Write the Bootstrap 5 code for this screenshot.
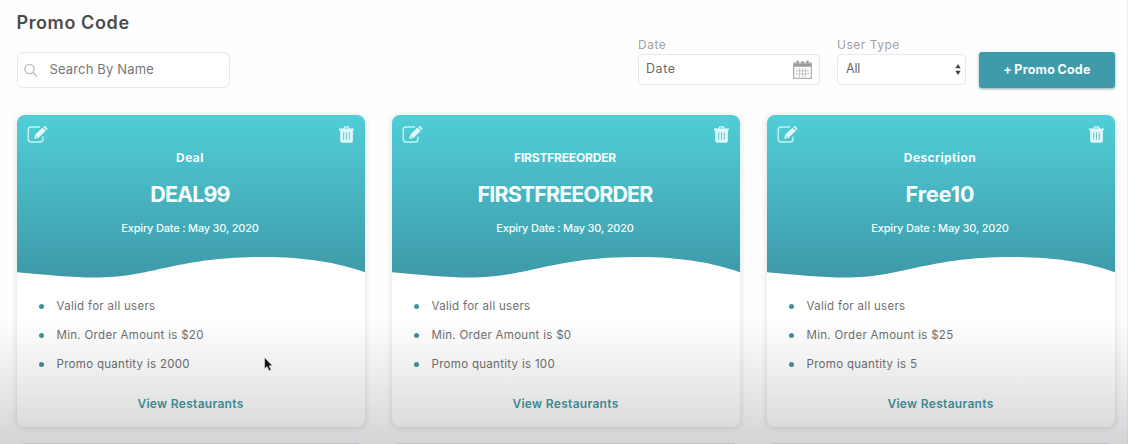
<!DOCTYPE html>
<html lang="en">
<head>
<meta charset="utf-8">
<meta name="viewport" content="width=device-width, initial-scale=1">
<title>Promo Code</title>
<link href="https://cdn.jsdelivr.net/npm/bootstrap@5.3.0/dist/css/bootstrap.min.css" rel="stylesheet">
<style>
  body { font-family: Inter, "Open Sans", sans-serif; color: #6b6b6b; background: #fefefe; height: 444px; overflow: hidden; }
  .page { height: 444px; padding: 0 12px 0 16.500px; overflow: hidden; border-right: 1px solid #eaf3f6; }
  .topbar { height: 115px; }
  .page-title { font-size: 18px; line-height: 24px; font-weight: 600; color: #4b4b4b; margin: 11px 0 17px; letter-spacing: .6px; }
  .search-box { width: 213px; height: 36px; border: 1px solid #e8e8ea; border-radius: 6px; padding-left: 6px; gap: 12px; font-size: 13px; letter-spacing: .15px; color: #777; background: #fff; }
  .filters { padding-top: 37px; }
  .filter-label { font-size: 12px; line-height: 16px; color: #a2a2a2; margin-bottom: 1px; letter-spacing: .5px; }
  .field { height: 31px; border: 1px solid #e8e8ea; border-radius: 4px; font-size: 12.5px; letter-spacing: .6px; color: #6a6a6a; padding: 0 7px; background: #fff; }
  .field-date { width: 182px; }
  .field-type { width: 129px; margin-left: 17px; padding: 0 4px 0 8px; letter-spacing: -.2px; }
  .label-type { margin-left: 17px; }
  .btn-promo { width: 136px; height: 36px; margin: 15px 0 0 13px; padding: 0; border: 0; border-radius: 3px; background: #3f9ba9; color: #f4ffff; font-size: 12.5px; letter-spacing: .25px; font-weight: 700; word-spacing: -1px; box-shadow: 0 1px 3px rgba(40,110,120,.55); }
  .btn-promo:hover { background: #37909e; color: #fff; }
  .promo-grid { display: grid; grid-template-columns: repeat(3, 348px); column-gap: 27px; row-gap: 16px; }
  .promo { height: 312px; border: 0; border-radius: 8px; background: #fff; box-shadow: 0 1px 6px rgba(40,30,70,.17); overflow: hidden; }
  .promo-head { height: 163px; background: linear-gradient(#50ced7, #3e99a8); color: #f4ffff; padding: 11px 11px 0 10px; text-align: center; }
  .promo-desc { font-size: 12px; line-height: 16px; font-weight: 700; margin-top: 7px; letter-spacing: .4px; }
  .promo-name { font-size: 21.500px; line-height: 30px; font-weight: 700; margin-top: 13px; }
  .promo-desc.caps { letter-spacing: -.2px; }
  .promo-name.caps { letter-spacing: -.9px; }
  .promo-expiry { font-size: 11px; line-height: 16px; font-weight: 500; margin-top: 11px; letter-spacing: -.2px; }
  .wave { left: 0; top: 140px; }
  .promo-list { list-style: none; margin: 0; padding: 20px 0 0 22px; font-size: 11.5px; line-height: 16px; color: #6f6f6f; letter-spacing: .3px; }
  .promo-list li { display: flex; align-items: center; height: 16px; margin-bottom: 13px; }
  .promo-list li::before { content: ""; width: 5px; height: 5px; border-radius: 50%; background: #42919c; margin-right: 13px; }
  .promo-link { display: block; text-align: center; font-size: 12px; line-height: 16px; font-weight: 600; color: #459aa3; text-decoration: none; margin-top: 11px; letter-spacing: .3px; }
  .next-row { height: 163px; border-radius: 8px 8px 0 0; background: #d2eef2; }
  .shade { left: 0; right: 0; bottom: 0; height: 126px; background: linear-gradient(rgba(0,0,0,0), rgba(0,0,0,.07) 45%, rgba(0,0,0,.165)); pointer-events: none; }
  .pointer { left: 263px; top: 356px; }
</style>
</head>
<body class="position-relative">
<svg class="d-none">
  <symbol id="edit" viewBox="0 0 21 17"><path d="M13 1H4.2A3 3 0 0 0 1.200 4v9a3 3 0 0 0 3 3H13a3 3 0 0 0 3-3v-2.500" fill="none" stroke="#c4f2f5" stroke-width="1.400"/><path d="M7.300 12.800l.8-4L15.600 1.500l3.200 3.200-7.500 7.400zM16.400.8l.7-.6q.6-.4 1.200.1l1.900 1.900q.5.6 0 1.200l-.6.7z" fill="#e2fcfd"/><path d="M8.700 9.600l2 2" stroke="#4cc0ca" stroke-width=".8"/></symbol>
  <symbol id="trash" viewBox="0 0 15 17"><path d="M0 2.600h4.200L5 .8Q5.300.2 6 .2h3q.7 0 1 .6l.8 1.800H15v1.700h-1.100v10.200q0 2.300-2 2.300H3.200q-2 0-2-2.300V4.300H0zM5.600 2.600h3.800l-.5-1H6.100z" fill="#dcfafb"/><path d="M4.700 6.200v7.600M7.500 6.200v7.600M10.300 6.200v7.600" stroke="#6cc4cd" stroke-width="1"/></symbol>
  <symbol id="wave" viewBox="0 0 348 24"><path d="M0 17.300C30 20 55 22.600 78 22.600C135 22.600 160 2 245 2C290 2 322 8 348 17.300V24H0z" fill="#fff"/></symbol>
</svg>
<main class="page">
  <header class="topbar d-flex justify-content-between align-items-start">
    <div>
      <h1 class="page-title">Promo Code</h1>
      <div class="search-box d-flex align-items-center">
        <svg width="14" height="15" viewBox="0 0 14 15" fill="none" stroke="#c2b8ae" stroke-width="1.300"><circle cx="5.500" cy="6" r="4.600"/><path d="M8.800 9.500l4.200 4.300"/></svg>
        <span>Search By Name</span>
      </div>
    </div>
    <div class="filters d-flex">
      <div>
        <div class="filter-label">Date</div>
        <div class="field field-date d-flex align-items-center justify-content-between">
          <span>Date</span>
          <svg width="19" height="19" viewBox="0 0 19 19" fill="none" stroke="#9c9c9c"><rect x=".7" y="3" width="17.600" height="15.300"/><path d="M1 4.500h17M1 6h17" stroke-width="1.500"/><path d="M4.500.5v4M9.500 1v3M14.500.5v4" stroke-width="2"/><path d="M6.600 8v9M9.600 8v9M12.600 8v9M3 10.800h13M3 13.900h13" stroke="#c4c4c4" stroke-width="1"/></svg>
        </div>
      </div>
      <div>
        <div class="filter-label label-type">User Type</div>
        <div class="field field-type d-flex align-items-center justify-content-between">
          <span>All</span>
          <svg width="6" height="11" viewBox="0 0 6 11" fill="#444"><path d="M3 0l2.700 4.200H.3zM3 11l2.700-4.200H.3z"/></svg>
        </div>
      </div>
      <button class="btn btn-promo" type="button">+ Promo Code</button>
    </div>
  </header>
  <section class="promo-grid" id="promos"></section>
</main>
<div class="shade position-absolute"></div>
<svg class="pointer position-absolute" width="11" height="17" viewBox="0 0 11 17"><path d="M1.500 1.500v11.300l2.600-2.200 1.900 4.200 2.100-.9-1.900-4.100h3.300z" fill="#111" stroke="#ddd" stroke-width=".7"/></svg>
<script>
  const promos = [
    ["Deal", "DEAL99", 20, 2000],
    ["FIRSTFREEORDER", "FIRSTFREEORDER", 0, 100],
    ["Description", "Free10", 25, 5]
  ];
  const caps = text => text === text.toUpperCase() ? "caps" : "";
  document.getElementById("promos").innerHTML = promos.map(([desc, name, min, qty]) => `
    <article class="card promo">
      <div class="promo-head">
        <div class="d-flex justify-content-between">
          <svg width="21" height="17"><use href="#edit"/></svg>
          <svg width="15" height="17"><use href="#trash"/></svg>
        </div>
        <div class="promo-desc ${caps(desc)}">${desc}</div>
        <div class="promo-name ${caps(name)}">${name}</div>
        <div class="promo-expiry">Expiry Date : May 30, 2020</div>
      </div>
      <svg class="wave position-absolute" width="348" height="24"><use href="#wave"/></svg>
      <ul class="promo-list">
        <li>Valid for all users</li>
        <li>Min. Order Amount is $${min}</li>
        <li>Promo quantity is ${qty}</li>
      </ul>
      <a class="promo-link" href="#">View Restaurants</a>
    </article>`).join("") + '<div class="next-row"></div>'.repeat(3);
</script>
<script src="https://cdn.jsdelivr.net/npm/bootstrap@5.3.0/dist/js/bootstrap.bundle.min.js"></script>
</body>
</html>
